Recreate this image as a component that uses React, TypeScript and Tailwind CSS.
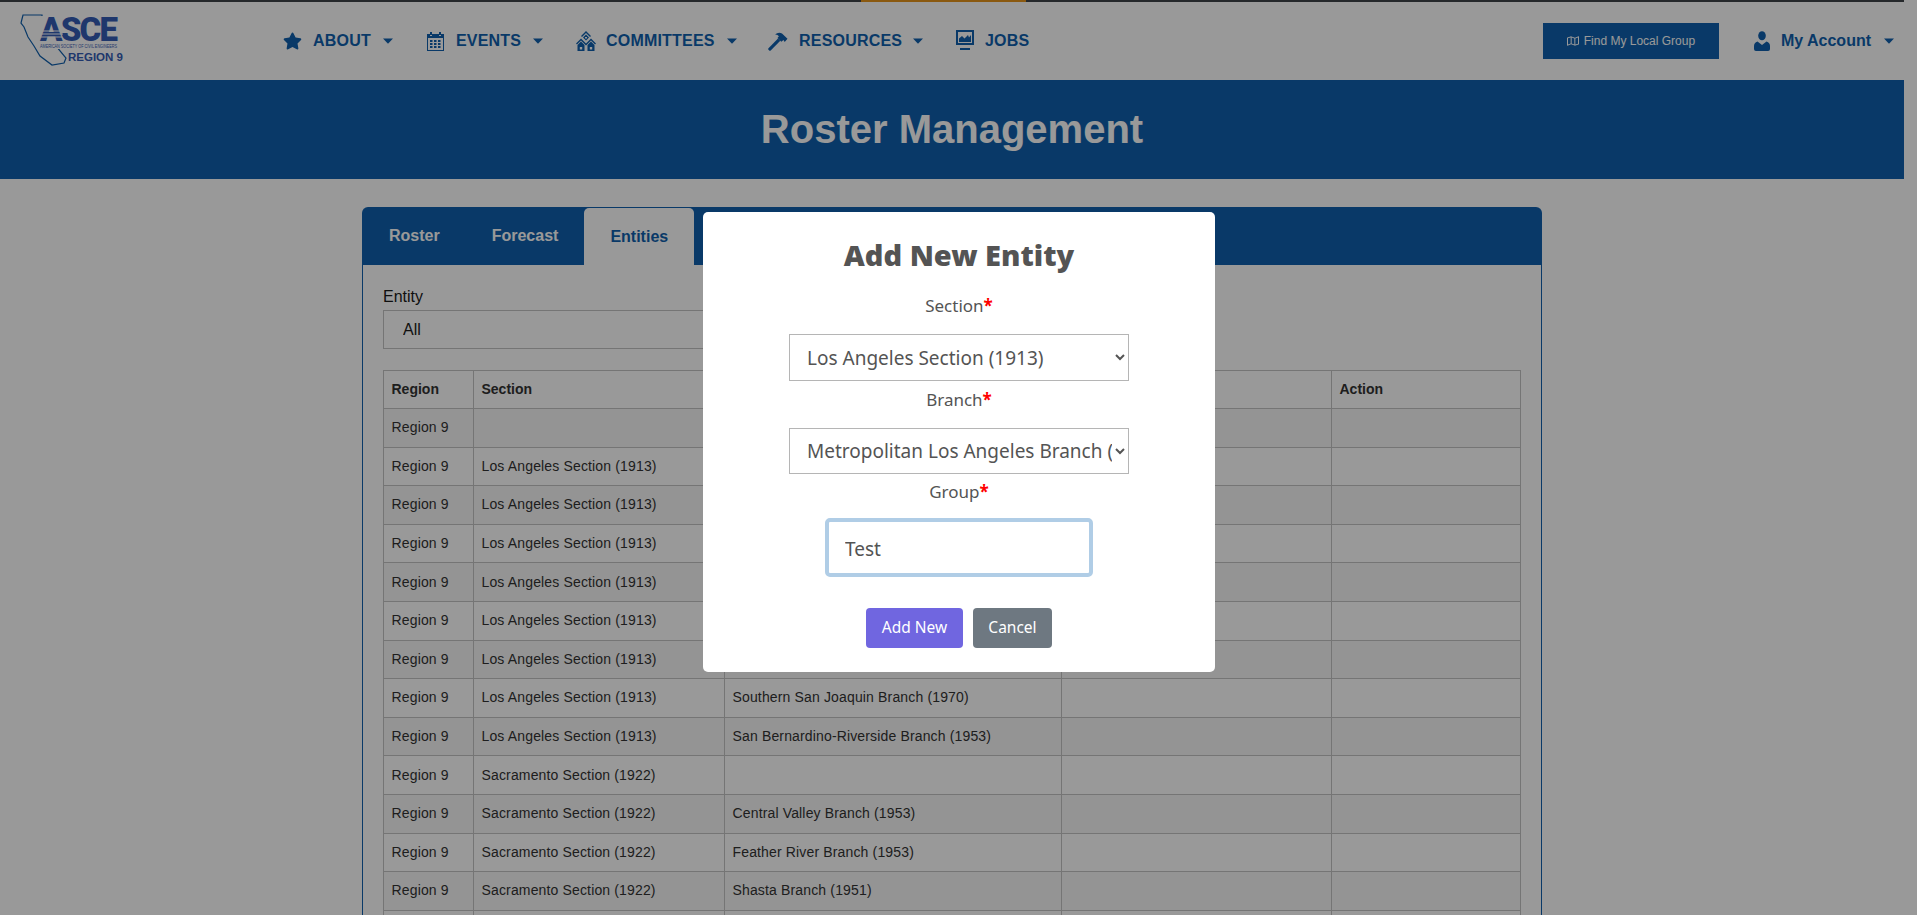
import { FaStar, FaRegMap } from 'react-icons/fa';

const BLUE = 'text-[#0f5fad]';

const ROWS: [string, string][] = [
  ['', ''],
  ['Los Angeles Section (1913)', ''],
  ['Los Angeles Section (1913)', ''],
  ['Los Angeles Section (1913)', ''],
  ['Los Angeles Section (1913)', ''],
  ['Los Angeles Section (1913)', ''],
  ['Los Angeles Section (1913)', ''],
  ['Los Angeles Section (1913)', 'Southern San Joaquin Branch (1970)'],
  ['Los Angeles Section (1913)', 'San Bernardino-Riverside Branch (1953)'],
  ['Sacramento Section (1922)', ''],
  ['Sacramento Section (1922)', 'Central Valley Branch (1953)'],
  ['Sacramento Section (1922)', 'Feather River Branch (1953)'],
  ['Sacramento Section (1922)', 'Shasta Branch (1951)'],
  ['Sacramento Section (1922)', ''],
];

function Caret({ className = '' }: { className?: string }) {
  return (
    <svg viewBox="0 0 10 6" className={`w-[10px] h-[6px] fill-[#0f5fad] ${className}`}>
      <path d="M0 0.4h10L5 5.8z" />
    </svg>
  );
}

function Logo() {
  return (
    <svg viewBox="0 0 130 78" className="w-[130px] h-[78px] shrink-0">
      <path
        d="M23 13h19v14l24 29-2 5-12 2-12-9-6-10-6-9-4-10-3-4 1-4z"
        fill="none"
        stroke="#0f5fad"
        strokeWidth="1.2"
      />
      <rect x="38" y="14" width="82" height="26" fill="#fff" />
      <text x="40" y="39" fontFamily="Roboto" fontWeight="900" fontSize="33" letterSpacing="-1.8" fill="#355cb5">
        ASCE
      </text>
      <path d="M40 29h24M39 32h24M38 35h24" stroke="#fff" strokeWidth="1" />
      <rect x="39" y="40" width="80" height="7" fill="#fff" />
      <text x="40" y="46" fontFamily="Liberation Sans" fontSize="5" textLength="77" lengthAdjust="spacingAndGlyphs" fill="#355cb5">
        AMERICAN SOCIETY OF CIVIL ENGINEERS
      </text>
      <text x="68" y="59" fontFamily="Liberation Sans" fontWeight="700" fontSize="11.5" fill="#355cb5">
        REGION 9
      </text>
    </svg>
  );
}

function CalendarIcon() {
  return (
    <svg viewBox="0 0 17 19" className="w-[17px] h-[19px] fill-[#0f5fad] shrink-0">
      <path d="M3 0h2v3H3zM12 0h2v3h-2z" />
      <path fillRule="evenodd" d="M0 2h3v2h2V2h7v2h2V2h3v17H0zM1 6v12h15V6z" />
      <path d="M3 8h2.500v2H3zM7 8h2.500v2H7zM11 8h2.500v2H11zM3 11h2.500v2H3zM7 11h2.500v2H7zM11 11h2.500v2H11zM3 14h2.500v2H3zM7 14h2.500v2H7zM11 14h2.500v2H11z" />
    </svg>
  );
}

function CommitteesIcon() {
  return (
    <svg viewBox="0 0 20 20" className="w-[20px] h-[20px] fill-[#0f5fad] shrink-0">
      <path fillRule="evenodd" d="M10 0l5 5-1 1-4-4-4 4-1-1zM10 3.500L13 6.500 10 9.500 7 6.500zM9 6v1.500h2V6z" />
      <path d="M5 7.500l5 5 5-5 5 5-1 1-4-4-5 5-5-5-4 4-1-1z" />
      <path fillRule="evenodd" d="M1.500 14L5 10.500 8.500 14v6h-7zM3.800 16v2.500h2.400V16zM11.500 14L15 10.500 18.500 14v6h-7zM13.800 16v2.500h2.400V16z" />
    </svg>
  );
}

function HammerIcon() {
  return (
    <svg viewBox="0 0 20 20" className="w-[20px] h-[20px] fill-[#0f5fad] shrink-0">
      <path d="M0.500 17.200L10 7.500l2.300 2.300-9.600 9.600q-0.800 0.700-1.500 0L0.500 18.700q-0.600-0.800 0-1.500z" />
      <path d="M7 3.500Q10.500 0.500 14 2.500l5.500 5.300-2.800 3.200-1.200-2-2.200 1.800-3.800-3.800 1.400-1.700Q9.500 3.200 7 3.500z" />
    </svg>
  );
}

function JobsIcon() {
  return (
    <svg viewBox="0 0 18 22" className="w-[18px] h-[22px] fill-[#0f5fad] shrink-0">
      <path fillRule="evenodd" d="M0 0h18v15H0zM2 2v11h14V2z" />
      <path d="M3 12V8.500l3-2.500 2.500 2.500L12 5l1 2.500L15 5v7z" />
      <path d="M4 18h10v2H4z" />
    </svg>
  );
}

function UserIcon() {
  return (
    <svg viewBox="0 0 16 20" className="w-[16px] h-[20px] fill-[#0f5fad] shrink-0">
      <ellipse cx="8" cy="4.800" rx="3.800" ry="4.500" />
      <path d="M3.500 10.500L8 14l4.500-3.500Q16 11.500 16 15v3q0 2-2 2H2q-2 0-2-2v-3q0-3.500 3.500-4.500z" />
    </svg>
  );
}

function NavItem({ icon, label, gap, caret, width }: { icon: React.ReactNode; label: string; gap: string; caret?: string; width: string }) {
  return (
    <a className={`flex items-center ${gap} ${width} shrink-0 ${BLUE} text-[16px] font-bold tracking-[0.2px]`}>
      {icon}
      <span>{label}</span>
      {caret && <Caret className={caret} />}
    </a>
  );
}

export default function App() {
  return (
    <div className="relative h-screen overflow-hidden bg-white font-['Liberation_Sans',Arial,sans-serif]">
      <div className="w-[1904px]">
        {/* top strip */}
        <div className="h-[2px] bg-[#3f4449]">
          <div className="w-[165px] h-[2px] bg-[#e6951c] ml-[861px]" />
        </div>

        {/* header */}
        <header className="h-[78px] flex items-center">
          <Logo />
          <nav className="flex items-center ml-[153px]">
            <NavItem width="w-[144px]" gap="gap-[11px]" icon={<FaStar className="w-[19px] h-[18px]" />} label="ABOUT" caret="ml-[1px]" />
            <NavItem width="w-[149px]" gap="gap-[12px]" icon={<CalendarIcon />} label="EVENTS" caret="ml-0" />
            <NavItem width="w-[192px]" gap="gap-[10px]" icon={<CommitteesIcon />} label="COMMITTEES" caret="ml-[2px]" />
            <NavItem width="w-[188px]" gap="gap-[11px]" icon={<HammerIcon />} label="RESOURCES" caret="ml-0" />
            <NavItem width="w-[80px]" gap="gap-[11px]" icon={<JobsIcon />} label="JOBS" />
          </nav>
          <a className="ml-auto w-[176px] h-[36px] bg-[#0f5fad] text-white text-[12px] flex items-center justify-center gap-[5px]">
            <FaRegMap className="w-[12px] h-[12px]" />
            Find My Local Group
          </a>
          <a className={`flex items-center ml-[35px] mr-[10px] ${BLUE} text-[16px] font-bold`}>
            <UserIcon />
            <span className="ml-[11px]">My Account</span>
            <Caret className="ml-[13px]" />
          </a>
        </header>

        {/* title banner */}
        <div className="h-[99px] bg-[#0f5fad] flex items-center justify-center pb-[2px]">
          <h1 className="text-white text-[40px] font-bold">Roster Management</h1>
        </div>

        {/* card */}
        <section className="w-[1180px] mx-auto mt-[28px]">
          <div className="h-[58px] bg-[#0f5fad] rounded-t-[6px] flex items-end pl-[1px] text-[16px] font-bold">
            <a className="h-full px-[26px] flex items-center text-white">Roster</a>
            <a className="h-full px-[26px] flex items-center text-white">Forecast</a>
            <a className="h-[57px] px-[26px] flex items-center bg-white rounded-t-[5px] text-[#0f5fad]">Entities</a>
          </div>
          <div className="border-x border-[#0f5fad] px-[20px] pt-[20px]">
            <label className="block text-[16px] leading-[24px] text-[#1a1a1a]">Entity</label>
            <select className="mt-[1px] block w-[600px] h-[39px] pl-[15px] border border-[#c4c4c4] bg-white text-[16px] text-[#1a1a1a]">
              <option>All</option>
            </select>
            <table className="mt-[21px] w-[1137px] table-fixed border-collapse text-[14px] tracking-[0.15px] text-[#333]">
              <colgroup>
                <col className="w-[90px]" />
                <col className="w-[251px]" />
                <col className="w-[337px]" />
                <col className="w-[270px]" />
                <col className="w-[189px]" />
              </colgroup>
              <thead>
                <tr className="h-[38px] border border-[#c4c4c4] border-b-[#333]">
                  {['Region', 'Section', 'Branch', 'Group', 'Action'].map((h) => (
                    <th key={h} className="border-x border-[#c4c4c4] px-[7.5px] text-left font-bold tracking-normal">
                      {h}
                    </th>
                  ))}
                </tr>
              </thead>
              <tbody>
                {ROWS.map(([section, branch], i) => (
                  <tr key={i} className={`h-[38.6px] ${i % 2 === 0 ? 'bg-black/[0.03]' : ''}`}>
                    <td className="border border-[#c4c4c4] px-[7.5px]">Region 9</td>
                    <td className="border border-[#c4c4c4] px-[7.5px]">{section}</td>
                    <td className="border border-[#c4c4c4] px-[7.5px]">{branch}</td>
                    <td className="border border-[#c4c4c4] px-[7.5px]"></td>
                    <td className="border border-[#c4c4c4] px-[7.5px]"></td>
                  </tr>
                ))}
              </tbody>
            </table>
          </div>
        </section>
      </div>

      {/* backdrop */}
      <div className="absolute inset-0 bg-black/40" />

      {/* modal */}
      <div className="absolute left-[703px] top-[212px] w-[512px] h-[460px] bg-white rounded-[5px] flex flex-col items-center text-[#545454] font-['Noto_Sans','Open_Sans',sans-serif]">
        <h2 className="mt-[23px] text-[29px] leading-[40px] font-black">Add New Entity</h2>
        <label className="mt-[19px] text-[17px] leading-[24px]">
          Section<span className="text-[#ff0000] font-bold">*</span>
        </label>
        <select defaultValue="la" className="mt-[16px] w-[340px] h-[47px] shrink-0 pl-[13px] border border-[#b5b5b5] bg-white text-[19px] text-[#545454]">
          <option value="la">Los Angeles Section (1913)</option>
        </select>
        <label className="mt-[7px] text-[17px] leading-[24px]">
          Branch<span className="text-[#ff0000] font-bold">*</span>
        </label>
        <select defaultValue="mla" className="mt-[16px] w-[340px] h-[46px] shrink-0 pl-[13px] border border-[#b5b5b5] bg-white text-[19px] text-[#545454]">
          <option value="mla">Metropolitan Los Angeles Branch (1913)</option>
        </select>
        <label className="mt-[6px] text-[17px] leading-[24px]">
          Group<span className="text-[#ff0000] font-bold">*</span>
        </label>
        <input
          defaultValue="Test"
          className="mt-[14px] w-[268px] h-[59px] shrink-0 pl-[16px] pt-[2px] border-[4px] border-[#b0cde6] rounded-[5px] text-[19px] text-[#545454] outline-none"
        />
        <div className="mt-[31px] flex gap-[10px]">
          <button className="w-[97px] h-[40px] rounded-[4px] bg-[#7066e0] text-white text-[15.5px]">Add New</button>
          <button className="w-[79px] h-[40px] rounded-[4px] bg-[#6e7881] text-white text-[15.5px]">Cancel</button>
        </div>
      </div>
    </div>
  );
}
